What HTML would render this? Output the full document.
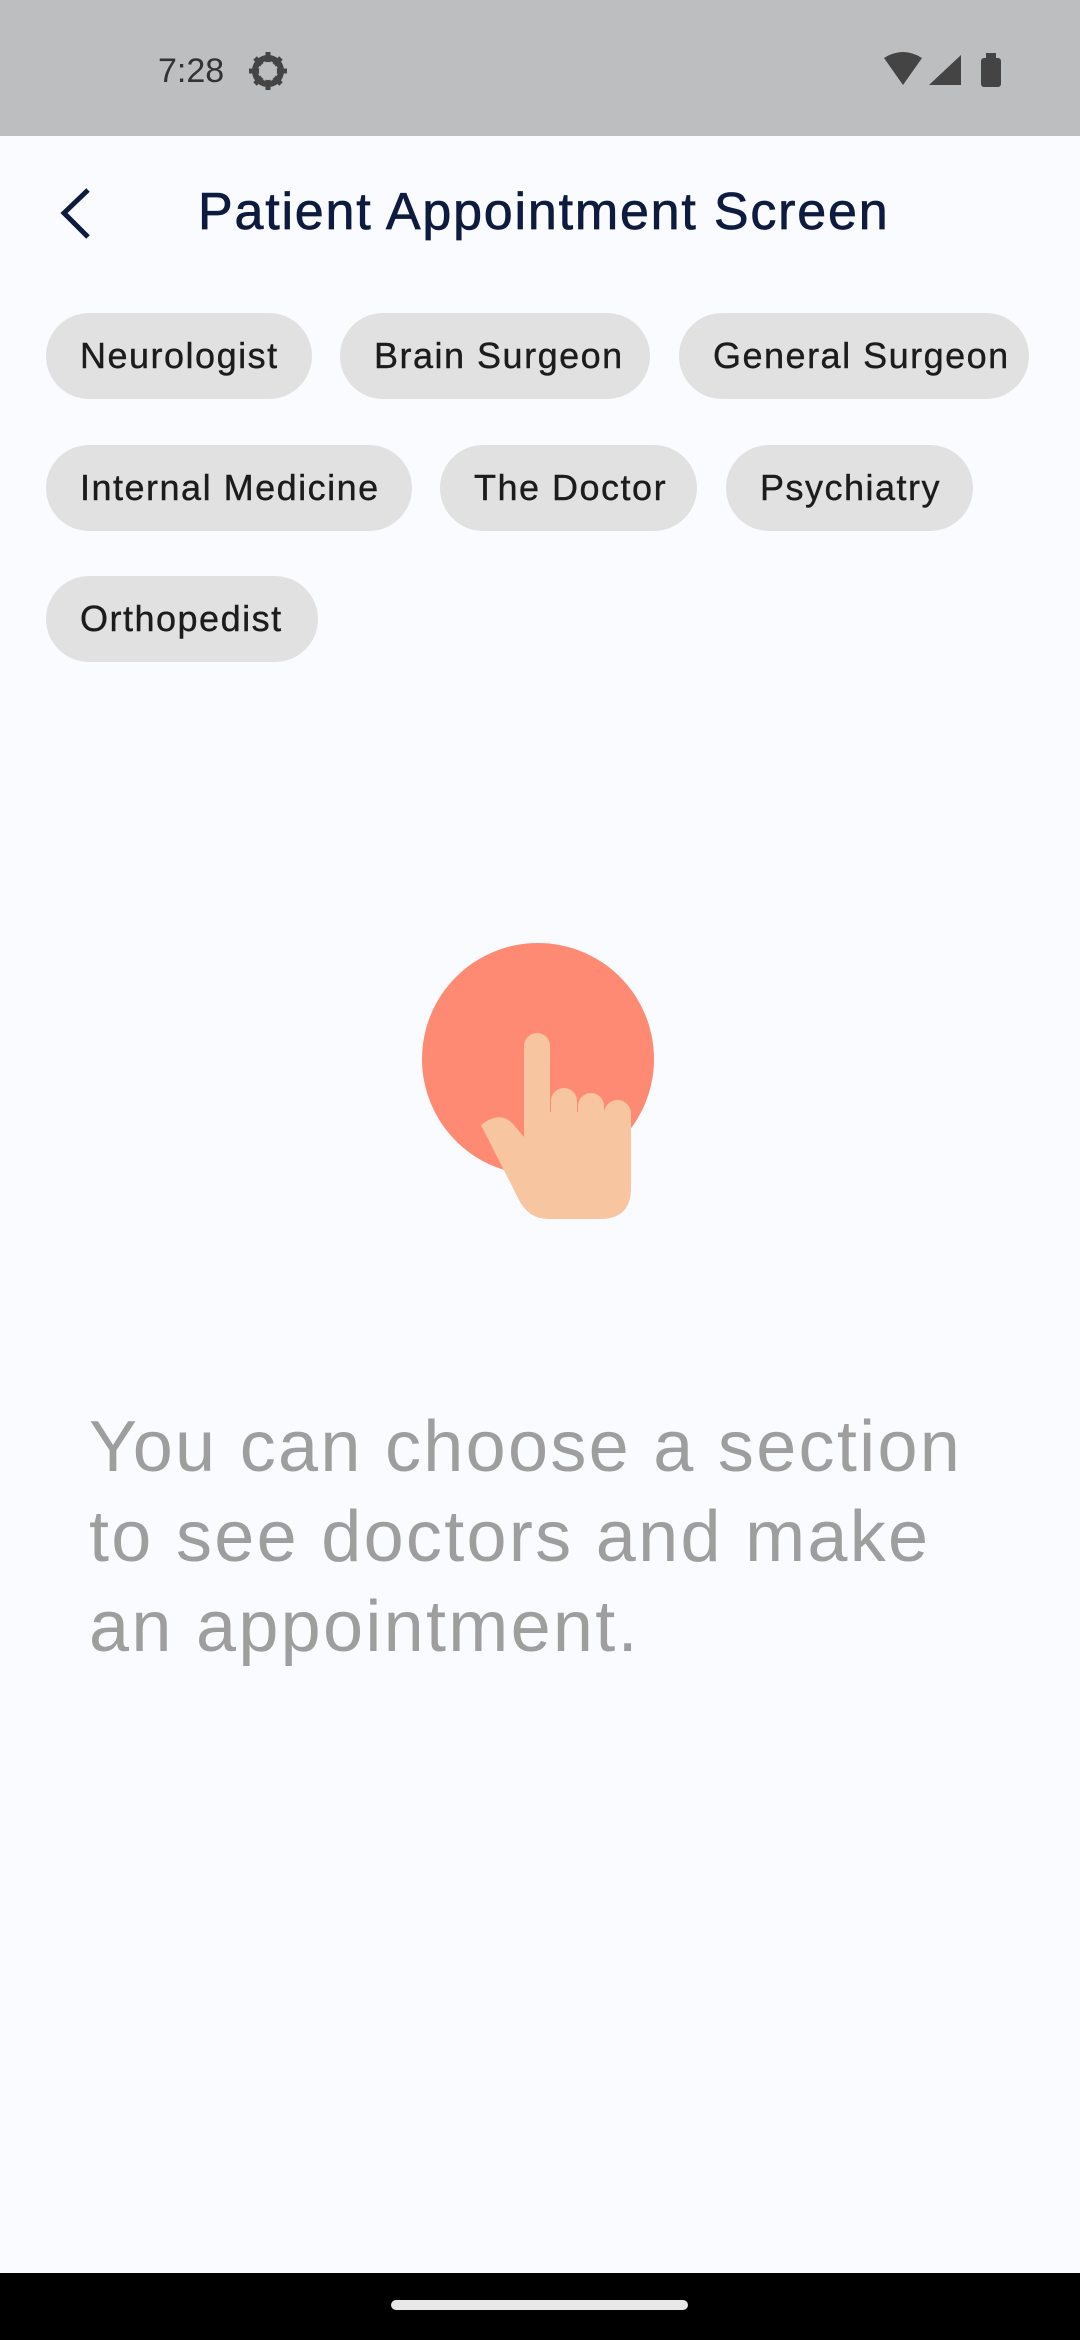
<!DOCTYPE html>
<html><head><meta charset="utf-8"><style>
*{margin:0;padding:0;box-sizing:border-box}
body{width:1080px;height:2340px;background:#fafbfe;font-family:"Liberation Sans",sans-serif;position:relative;overflow:hidden}
.status{position:absolute;left:0;top:0;width:1080px;height:136px;background:#bdbebf}
.time{position:absolute;left:158px;top:52px;font-size:34px;color:#333;}
.title{position:absolute;left:198px;top:182px;font-size:52px;letter-spacing:1.8px;color:#0d1b3e;-webkit-text-stroke:0.7px #0d1b3e;white-space:nowrap}
.chip{position:absolute;height:86px;border-radius:43px;background:#e1e1e1;color:#1c1c1c;font-size:36px;letter-spacing:1.5px;line-height:86px;padding-left:34px;-webkit-text-stroke:0.4px #1c1c1c;white-space:nowrap}
.msg{position:absolute;left:89px;top:1402px;font-size:72px;letter-spacing:2.3px;line-height:90px;color:#9e9e9e;white-space:nowrap}
.nav{position:absolute;left:0;top:2273px;width:1080px;height:67px;background:#000}
.pill{position:absolute;left:391px;top:2300px;width:297px;height:10px;border-radius:5px;background:#e8e8e8}
</style></head><body>
<div class="status"></div>
<div class="time">7:28</div>
<svg style="position:absolute;left:0;top:0" width="1080" height="140">
 <g fill="#444">
  <circle cx="268" cy="71" r="13" fill="none" stroke="#444" stroke-width="6"/>
  <g stroke="#444" stroke-width="5">
   <line x1="268" y1="52" x2="268" y2="90"/><line x1="249" y1="71" x2="287" y2="71"/>
   <line x1="255" y1="58" x2="281" y2="84"/><line x1="281" y1="58" x2="255" y2="84"/>
  </g>
  <circle cx="268" cy="71" r="9" fill="#bdbebf"/>
  <path d="M884 58 Q903 46 922 58 L903 85 Z"/>
  <path d="M961 55 L961 85 L929 85 Z"/>
  <rect x="981" y="58" width="20" height="29" rx="3"/><rect x="986" y="53" width="10" height="6"/>
 </g>
</svg>
<svg style="position:absolute;left:0;top:0" width="140" height="260"><path d="M88 190 L64 213 L88 237" fill="none" stroke="#0d1b3e" stroke-width="5"/></svg>
<div class="title">Patient Appointment Screen</div>
<div class="chip" style="left:46px;top:313px;width:266px">Neurologist</div>
<div class="chip" style="left:340px;top:313px;width:310px">Brain Surgeon</div>
<div class="chip" style="left:679px;top:313px;width:350px">General Surgeon</div>
<div class="chip" style="left:46px;top:445px;width:366px">Internal Medicine</div>
<div class="chip" style="left:440px;top:445px;width:257px">The Doctor</div>
<div class="chip" style="left:726px;top:445px;width:247px">Psychiatry</div>
<div class="chip" style="left:46px;top:576px;width:272px">Orthopedist</div>
<svg style="position:absolute;left:0;top:0" width="1080" height="1300">
 <circle cx="538" cy="1059" r="116" fill="#ff8a73"/>
 <g fill="#f7c6a0">
  <rect x="524" y="1033" width="26" height="150" rx="13"/>
  <rect x="551" y="1088" width="26" height="80" rx="13"/>
  <rect x="578" y="1093" width="26" height="80" rx="13"/>
  <rect x="604" y="1100" width="27" height="80" rx="13.5"/>
  <path d="M481 1125 Q500 1110 513 1124 L524 1137 L524 1112 L631 1112 L631 1188 Q631 1219 600 1219 L548 1219 Q528 1219 518 1198 Z"/>
 </g>
</svg>
<div class="msg">You can choose a section<br>to see doctors and make<br>an appointment.</div>
<div class="nav"></div><div class="pill"></div>
</body></html>
